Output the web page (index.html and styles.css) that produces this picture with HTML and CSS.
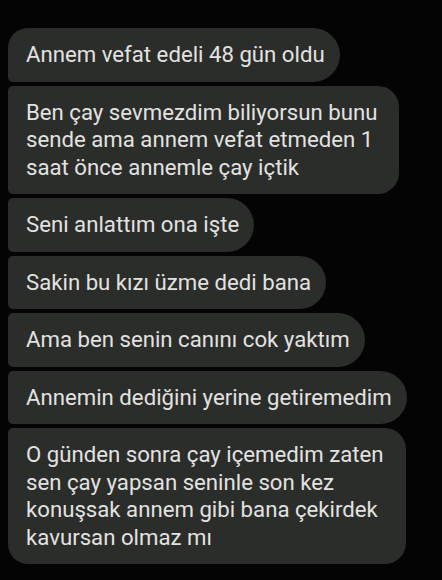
FILE: index.html
```html
<!DOCTYPE html>
<html lang="tr">
<head>
<meta charset="utf-8">
<link rel="stylesheet" href="styles.css">
</head>
<body>
<div class="chat">
  <div class="msg first">Annem vefat edeli 48 gün oldu</div>
  <div class="msg multi">Ben çay sevmezdim biliyorsun bunu<br>sende ama annem vefat etmeden 1<br>saat önce annemle çay içtik</div>
  <div class="msg">Seni anlattım ona işte</div>
  <div class="msg">Sakin bu kızı üzme dedi bana</div>
  <div class="msg">Ama ben senin canını cok yaktım</div>
  <div class="msg">Annemin dediğini yerine getiremedim</div>
  <div class="msg multi last">O günden sonra çay içemedim zaten<br>sen çay yapsan seninle son kez<br>konuşsak annem gibi bana çekirdek<br>kavursan olmaz mı</div>
</div>
</body>
</html>
```
FILE: styles.css
```css
html, body {
  margin: 0;
  padding: 0;
  background: #040404;
}
body {
  width: 442px;
  height: 580px;
  overflow: hidden;
  font-family: Roboto, "Noto Sans", sans-serif;
}
.chat {
  display: flex;
  flex-direction: column;
  align-items: flex-start;
  gap: 4px;
  padding: 28px 0 0 8px;
}
.msg {
  background: #2b2d2a;
  color: #e2e2e0;
  font-size: 22.2px;
  line-height: 27.5px;
  padding: 13px 15px 13px 18px;
  border-radius: 5px 27px 27px 5px;
  white-space: nowrap;
}
.msg.multi {
  border-radius: 5px 21px 21px 5px;
  padding-right: 22px;
}
.msg.first {
  border-top-left-radius: 20px;
}
.msg.last {
  border-bottom-left-radius: 20px;
}
```
